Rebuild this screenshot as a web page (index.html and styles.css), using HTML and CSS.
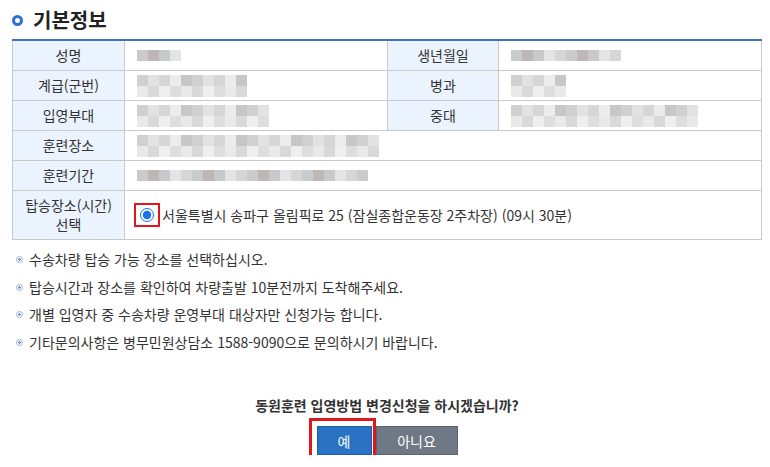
FILE: index.html
```html
<!DOCTYPE html>
<html lang="ko">
  <head>
    <meta charset="UTF-8" />
    <meta name="viewport" content="width=device-width, initial-scale=1.0" />
    <title>기본정보</title>
    <link rel="stylesheet" href="styles.css">
  </head>
  <body>
    <div class="wrap">
      <h2 class="title"><span class="title-icon"></span>기본정보</h2>

      <table class="info">
        <colgroup>
          <col class="c-label" />
          <col class="c-value" />
          <col class="c-label2" />
          <col />
        </colgroup>
        <tr>
          <th>성명</th>
          <td><span class="mosaic w-44 one"></span></td>
          <th>생년월일</th>
          <td><span class="mosaic w-110 one"></span></td>
        </tr>
        <tr>
          <th>계급(군번)</th>
          <td><span class="mosaic w-110"></span></td>
          <th>병과</th>
          <td><span class="mosaic w-55"></span></td>
        </tr>
        <tr>
          <th>입영부대</th>
          <td><span class="mosaic w-132"></span></td>
          <th>중대</th>
          <td><span class="mosaic w-187"></span></td>
        </tr>
        <tr>
          <th>훈련장소</th>
          <td colspan="3"><span class="mosaic w-242"></span></td>
        </tr>
        <tr>
          <th>훈련기간</th>
          <td colspan="3"><span class="mosaic w-231 one"></span></td>
        </tr>
        <tr class="tall">
          <th>탑승장소(시간)<br />선택</th>
          <td colspan="3">
            <label class="pick">
              <span class="radio-box"><input type="radio" name="place" checked /></span>
              서울특별시 송파구 올림픽로 25 (잠실종합운동장 2주차장) (09시 30분)
            </label>
          </td>
        </tr>
      </table>

      <ul class="notes">
        <li>수송차량 탑승 가능 장소를 선택하십시오.</li>
        <li>탑승시간과 장소를 확인하여 차량출발 10분전까지 도착해주세요.</li>
        <li>개별 입영자 중 수송차량 운영부대 대상자만 신청가능 합니다.</li>
        <li>기타문의사항은 병무민원상담소 1588-9090으로 문의하시기 바랍니다.</li>
      </ul>

      <p class="ask">동원훈련 입영방법 변경신청을 하시겠습니까?</p>
      <div class="btns">
        <span class="btn-mark"><button class="btn btn-yes">예</button></span>
        <button class="btn btn-no">아니요</button>
      </div>
    </div>
  </body>
</html>
```

FILE: styles.css
```css
body {
  margin: 0;
  font-family: "Noto Sans CJK KR", "Noto Sans", sans-serif;
  font-size: 14px;
  color: #333;
  background: #fff;
}
.wrap {
  padding: 0 8px 0 12px;
}
.title {
  margin: 0;
  height: 39px;
  line-height: 39px;
  font-size: 20px;
  font-weight: 700;
  color: #222;
  display: flex;
  align-items: center;
}
.title-icon {
  width: 5px;
  height: 5px;
  border: 3px solid #2f6fd6;
  border-radius: 50%;
  margin-right: 10px;
  margin-top: 1px;
}
.info {
  width: 750px;
  table-layout: fixed;
  border-collapse: collapse;
  border-top: 2px solid #4470c0;
}
.c-label {
  width: 112px;
}
.c-value {
  width: 263px;
}
.c-label2 {
  width: 111px;
}
.info th,
.info td {
  height: 29px;
  padding: 0;
  border: 1px solid #c9c9c9;
  line-height: 19px;
}
.info th {
  background: #ebf3fe;
  font-weight: 400;
  color: #333;
  text-align: center;
}
.info td {
  padding-left: 12px;
}
.info tr.tall th,
.info tr.tall td {
  height: 48px;
}
.mosaic {
  display: block;
  height: 22px;
  background:
    repeating-linear-gradient(90deg, #cfd0d1 0 11px, #e3e2e0 11px 22px, #d6d6d6 22px 33px, #ececec 33px 44px, #c7c7c8 44px 55px) top / 100% 50% no-repeat,
    repeating-linear-gradient(90deg, #e9e9e9 0 11px, #d9d9d9 11px 22px, #efefef 22px 33px, #dedede 33px 44px) bottom / 100% 50% no-repeat;
}
.mosaic.one {
  height: 11px;
  background: repeating-linear-gradient(90deg, #c9cbcd 0 11px, #bdb8b5 11px 22px, #c8c9cb 22px 33px, #e4e4e6 33px 44px, #d6d6d6 44px 55px);
}
.w-44 { width: 44px; }
.w-55 { width: 55px; }
.w-110 { width: 110px; }
.w-132 { width: 132px; }
.w-187 { width: 187px; }
.w-231 { width: 231px; }
.w-242 { width: 242px; }
.pick {
  display: flex;
  align-items: center;
  margin-left: -3px;
}
.radio-box {
  position: relative;
  width: 22px;
  height: 20px;
  border: 2px solid #e0161f;
  display: flex;
  align-items: center;
  justify-content: center;
  margin-right: 2px;
}
.radio-box input {
  margin: 0;
  width: 14px;
  height: 14px;
  accent-color: #1a73e8;
}
.notes {
  list-style: none;
  margin: 6px 0 0;
  padding: 0;
}
.notes li {
  line-height: 27.5px;
  padding-left: 17px;
  position: relative;
}
.notes li::before {
  content: "";
  position: absolute;
  left: 4px;
  top: 10px;
  width: 5px;
  height: 5px;
  border: 1px solid #9db3d6;
  border-radius: 50%;
  background: radial-gradient(circle, #6f8fc4 0 1px, #fff 1.5px);
}
.ask {
  margin: 39px 0 0;
  text-align: center;
  font-weight: 700;
  line-height: 20px;
  color: #333;
}
.btns {
  margin-top: 11px;
  display: flex;
  justify-content: center;
  gap: 4px;
}
.btn-mark {
  position: relative;
  display: block;
}
.btn-mark::after {
  content: "";
  position: absolute;
  left: -8px;
  right: -4px;
  top: -8px;
  bottom: -8px;
  border: 3px solid #e0161f;
}
.btn {
  font-family: inherit;
  font-size: 14px;
  color: #fff;
  height: 29px;
  padding: 0;
  cursor: pointer;
  border: 1px solid transparent;
}
.btn-yes {
  width: 55px;
  background: #2a72c3;
  border-color: #1f5fa8;
}
.btn-no {
  width: 82px;
  background: #6e7985;
  border-color: #5d6670;
}
```
